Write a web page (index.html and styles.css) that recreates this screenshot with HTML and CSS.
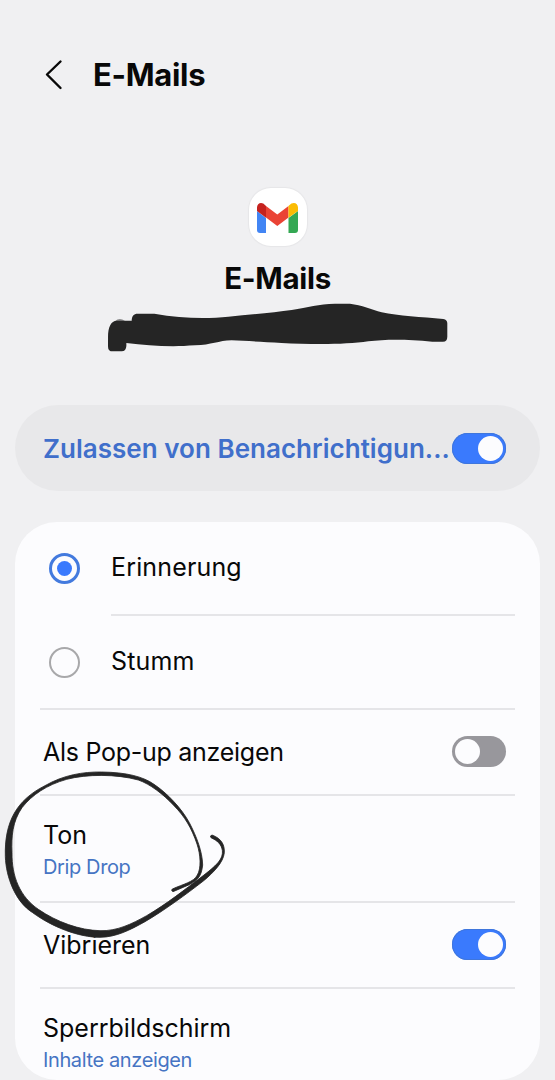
FILE: index.html
```html
<!DOCTYPE html>
<html lang="de">
<head>
<meta charset="utf-8">
<title>E-Mails</title>
<link rel="stylesheet" href="styles.css">
</head>
<body>
<main class="screen">
  <header class="topbar">
    <svg class="back" viewBox="0 0 20 32"><path d="M16.500 2.500 3 15.500 16.500 29"/></svg>
    <h1 class="title">E-Mails</h1>
  </header>

  <section class="app">
    <div class="app-icon">
      <svg viewBox="0 0 58 58">
        <path fill="#4285f4" d="M9 23 18 30V45H12a3 3 0 0 1-3-3Z"/>
        <path fill="#34a853" d="M40.500 30 50 23V42a3 3 0 0 1-3 3H40.500Z"/>
        <path fill="#ea4335" d="M18 18 29.300 26.500 40.500 18V29.500L29.300 38 18 29.500Z"/>
        <path fill="#c5221f" d="M9 19.500C9 15 14 13 17.500 17.500L18 18V29.800L9 23Z"/>
        <path fill="#fbbc04" d="M50 19.500C50 15 45 13 41 17.500L40.500 18V29.800L50 23Z"/>
      </svg>
    </div>
    <h2 class="app-name">E-Mails</h2>
    <svg class="redaction" viewBox="0 0 1095 170">
      <path fill="#8b8b8d" d="M60 52Q73 38 90 51Z"/>
      <path fill="#252525" d="M39 98C39 70 48 50 65 50H110C110 36 116 29 128 29H178C260 44 340 44 400 38C470 32 540 25 590 18C640 10 670 0 720 -1H765C800 3 830 17 860 25C910 36 980 39 1045 45Q1057 47 1057 58V98Q1057 113 1044 113H1012C930 105 870 106 820 112C750 123 640 121 560 117C500 113 450 111 410 109C370 110 350 123 300 124C220 130 160 124 94 117V126Q93 142 80 142H53Q39 142 39 128Z"/>
    </svg>
  </section>

  <section class="allow">
    <span class="allow-text">Zulassen von Benachrichtigun...</span>
    <span class="switch on"></span>
  </section>

  <section class="card">
    <div class="row option">
      <span class="radio checked"></span>
      <span class="label">Erinnerung</span>
    </div>
    <div class="row option stumm-row">
      <span class="radio"></span>
      <span class="label">Stumm</span>
    </div>
    <div class="row popup">
      <span class="label">Als Pop-up anzeigen</span>
      <span class="switch"></span>
    </div>
    <div class="row sound">
      <div class="stack">
        <span class="label">Ton</span>
        <span class="sub">Drip Drop</span>
      </div>
      <svg class="scribble" viewBox="0 0 720 540">
        <path class="ink" d="M16 290C13 185 50 120 135 77C190 45 250 35 305 36C380 37 430 50 462 73C500 98 545 145 568 188C590 230 607 275 608 315C604 348 596 358 568 374L519 395Q512 392 517 387C550 372 582 366 592 345C604 325 602 285 591 252C575 205 555 170 520 135C490 103 450 72 415 60C350 42 260 42 200 58C140 75 97 104 66 143C37 185 34 230 36 278C35 350 60 410 115 448C170 486 240 511 300 512C350 514 395 492 440 467C500 432 555 388 603 352C650 316 670 298 667 271C664 252 652 242 633 233Q628 228 636 225C666 236 674 256 673 278C670 308 640 338 610 363C560 402 490 453 435 485C390 510 350 531 300 532C235 532 155 500 98 458C45 425 18 350 16 290Z"/>
      </svg>
    </div>
    <div class="row vibrate">
      <span class="label">Vibrieren</span>
      <span class="switch on"></span>
    </div>
    <div class="row lock">
      <div class="stack">
        <span class="label">Sperrbildschirm</span>
        <span class="sub">Inhalte anzeigen</span>
      </div>
    </div>
  </section>
</main>
</body>
</html>
```
FILE: styles.css
```css
* { box-sizing: border-box; }
body {
  margin: 0;
  background: #f0f0f2;
  color: #080808;
  font-family: Inter, "Liberation Sans", sans-serif;
}
.screen { width: 555px; height: 1080px; overflow: hidden; padding: 0 15px; }
.topbar { height: 150px; display: flex; align-items: center; padding-left: 29px; gap: 29px; }
.back { width: 20px; height: 32px; fill: none; stroke: #080808; stroke-width: 2.4; stroke-linecap: round; stroke-linejoin: round; }
.title, .app-name { margin: 0; font-size: 31px; line-height: 40px; font-weight: 700; letter-spacing: -0.3px; }
.app { height: 255px; padding-top: 37.500px; display: flex; flex-direction: column; align-items: center; }
.app-icon { width: 58px; height: 58px; border-radius: 22px; background: #fff; box-shadow: 0 0 1px 1px #e6e6e8; }
.app-icon svg { display: block; width: 58px; height: 58px; margin-left: -1px; }
.app-name { font-size: 29.500px; margin-top: 12px; }
.redaction { width: 365px; height: 56.67px; margin-top: 6px; overflow: visible; flex: none; }
.allow {
  height: 86px; width: 525px; border-radius: 43px; background: #e8e8ea;
  display: flex; align-items: center; justify-content: space-between; padding: 0 34px 0 28px;
}
.allow-text { color: #406fcb; font-size: 26px; font-weight: 600; white-space: nowrap; letter-spacing: 0.03px; }
.switch { width: 54px; height: 31px; border-radius: 16px; background: #98979c; padding: 3px; display: flex; flex: none; }
.switch::before { content: ""; width: 25px; height: 25px; border-radius: 50%; background: #fcfcfe; }
.switch.on { background: #3a7afd; justify-content: flex-end; box-shadow: inset 0 0 0 1px #3f76dc; }
.card { margin-top: 31px; width: 525px; height: 558px; border-radius: 42px; background: #fcfcfe; padding: 0 25px; }
.row { position: relative; display: flex; align-items: center; justify-content: space-between; padding: 0 9px 0 3px; border-bottom: 2px solid #e5e5e8; }
.label { font-size: 25px; line-height: 32px; white-space: nowrap; letter-spacing: 0; }
.sub { font-size: 20px; line-height: 28px; color: #4674c3; white-space: nowrap; letter-spacing: -0.38px; margin-top: 2px; }
.stack { display: flex; flex-direction: column; }
.option { height: 94px; margin-left: 71px; padding-left: 0; justify-content: flex-start; }
.option .label { padding-bottom: 3px; letter-spacing: 0.15px; }
.option .radio { margin-left: -62px; margin-right: 31px; }
.stumm-row { margin-left: 0; padding-left: 71px; }
.radio { width: 31px; height: 31px; flex: none; border: 2px solid #a8a8aa; border-radius: 50%; display: grid; place-items: center; }
.radio.checked { border: 3px solid #437ade; }
.radio.checked::before { content: ""; width: 15px; height: 15px; border-radius: 50%; background: #3a7afd; }
.popup { height: 86px; }
.popup .label { letter-spacing: -0.27px; }
.row .switch { margin-bottom: 2px; }
.sound { height: 107px; }
.sound .stack { padding-top: 2px; }
.vibrate { height: 86px; }
.lock { height: 99px; border-bottom: 0; }
.lock .stack { padding-top: 8px; }
.scribble { position: absolute; left: -40px; top: -36px; width: 240px; height: 180px; z-index: 1; pointer-events: none; }
.ink { fill: #252525; stroke: #252525; stroke-width: 2.500; }
```
